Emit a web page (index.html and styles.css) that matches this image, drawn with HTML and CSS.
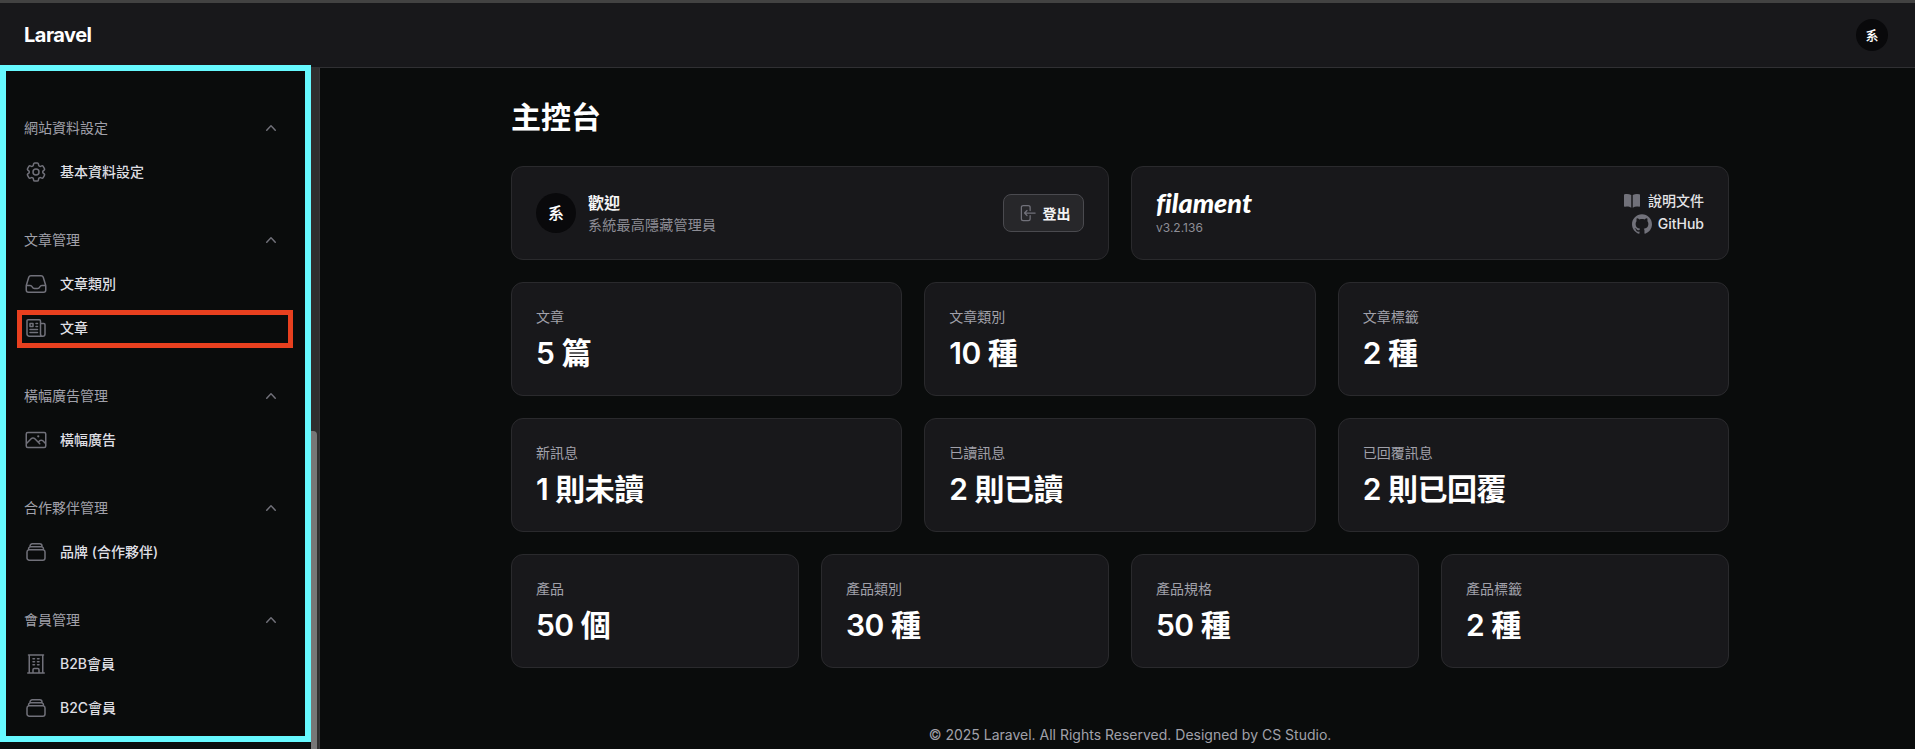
FILE: index.html
```html
<!DOCTYPE html>
<html lang="zh-TW">
<head>
    <meta charset="UTF-8">
    <meta name="viewport" content="width=device-width, initial-scale=1.0">
    <title>主控台 - Laravel</title>
    <link rel="stylesheet" href="styles.css">
</head>
<body>
    <div class="top-strip"></div>
    <header class="topbar">
        <a class="brand">Laravel</a>
        <div class="avatar avatar-small">系</div>
    </header>

    <div class="layout">
        <aside class="sidebar">
            <nav class="nav">
                <div class="nav-group">
                    <div class="nav-label">
                        <span>網站資料設定</span>
                        <svg class="chevron" viewBox="0 0 20 20"><path d="M14.77 12.79a.75.75 0 0 1-1.06-.02L10 8.832 6.29 12.77a.75.75 0 1 1-1.08-1.04l4.25-4.5a.75.75 0 0 1 1.08 0l4.25 4.5a.75.75 0 0 1-.02 1.06Z"/></svg>
                    </div>
                    <a class="nav-item">
                        <svg class="nav-icon" viewBox="0 0 24 24"><path d="M9.594 3.94c.09-.542.56-.94 1.11-.94h2.593c.55 0 1.02.398 1.11.94l.213 1.281c.063.374.313.686.645.87.074.04.147.083.22.127.325.196.72.257 1.075.124l1.217-.456a1.125 1.125 0 0 1 1.37.49l1.296 2.247a1.125 1.125 0 0 1-.26 1.431l-1.003.827c-.293.241-.438.613-.43.992a7.723 7.723 0 0 1 0 .255c-.008.378.137.75.43.991l1.004.827c.424.35.534.955.26 1.43l-1.298 2.247a1.125 1.125 0 0 1-1.369.491l-1.217-.456c-.355-.133-.75-.072-1.076.124a6.47 6.47 0 0 1-.22.128c-.331.183-.581.495-.644.869l-.213 1.281c-.09.543-.56.94-1.11.94h-2.594c-.55 0-1.019-.398-1.11-.94l-.213-1.281c-.062-.374-.312-.686-.644-.87a6.52 6.52 0 0 1-.22-.127c-.325-.196-.72-.257-1.076-.124l-1.217.456a1.125 1.125 0 0 1-1.369-.49l-1.297-2.247a1.125 1.125 0 0 1 .26-1.431l1.004-.827c.292-.24.437-.613.43-.991a6.932 6.932 0 0 1 0-.255c.007-.38-.138-.751-.43-.992l-1.004-.827a1.125 1.125 0 0 1-.26-1.43l1.297-2.247a1.125 1.125 0 0 1 1.37-.491l1.216.456c.356.133.751.072 1.076-.124.072-.044.146-.086.22-.128.332-.183.582-.495.644-.869l.214-1.28Z"/><path d="M15 12a3 3 0 1 1-6 0 3 3 0 0 1 6 0Z"/></svg>
                        <span>基本資料設定</span>
                    </a>
                </div>

                <div class="nav-group">
                    <div class="nav-label">
                        <span>文章管理</span>
                        <svg class="chevron" viewBox="0 0 20 20"><path d="M14.77 12.79a.75.75 0 0 1-1.06-.02L10 8.832 6.29 12.77a.75.75 0 1 1-1.08-1.04l4.25-4.5a.75.75 0 0 1 1.08 0l4.25 4.5a.75.75 0 0 1-.02 1.06Z"/></svg>
                    </div>
                    <a class="nav-item">
                        <svg class="nav-icon" viewBox="0 0 24 24"><path d="M2.25 13.5h3.86a2.25 2.25 0 0 1 2.012 1.244l.256.512a2.25 2.25 0 0 0 2.013 1.244h3.218a2.25 2.25 0 0 0 2.013-1.244l.256-.512a2.25 2.25 0 0 1 2.013-1.244h3.859m-19.5.338V18a2.25 2.25 0 0 0 2.25 2.25h15A2.25 2.25 0 0 0 21.75 18v-4.162c0-.224-.034-.447-.1-.661L19.24 5.338a2.25 2.25 0 0 0-2.15-1.588H6.911a2.25 2.25 0 0 0-2.15 1.588L2.35 13.177a2.25 2.25 0 0 0-.1.661Z"/></svg>
                        <span>文章類別</span>
                    </a>
                    <a class="nav-item nav-item-marked">
                        <svg class="nav-icon" viewBox="0 0 24 24"><path d="M12 7.5h1.5m-1.5 3h1.5m-7.5 3h7.5m-7.5 3h7.5m3-9h3.375c.621 0 1.125.504 1.125 1.125V18a2.25 2.25 0 0 1-2.25 2.25M16.5 7.5V18a2.25 2.25 0 0 0 2.25 2.25M16.5 7.5V4.875c0-.621-.504-1.125-1.125-1.125H4.125C3.504 3.75 3 4.254 3 4.875V18a2.25 2.25 0 0 0 2.25 2.25h13.5M6 7.5h3v3H6v-3Z"/></svg>
                        <span>文章</span>
                    </a>
                </div>

                <div class="nav-group">
                    <div class="nav-label">
                        <span>橫幅廣告管理</span>
                        <svg class="chevron" viewBox="0 0 20 20"><path d="M14.77 12.79a.75.75 0 0 1-1.06-.02L10 8.832 6.29 12.77a.75.75 0 1 1-1.08-1.04l4.25-4.5a.75.75 0 0 1 1.08 0l4.25 4.5a.75.75 0 0 1-.02 1.06Z"/></svg>
                    </div>
                    <a class="nav-item">
                        <svg class="nav-icon" viewBox="0 0 24 24"><path d="m2.25 15.75 5.159-5.159a2.25 2.25 0 0 1 3.182 0l5.159 5.159m-1.5-1.5 1.409-1.409a2.25 2.25 0 0 1 3.182 0l2.909 2.909m-18 3.75h16.5a1.5 1.5 0 0 0 1.5-1.5V6a1.5 1.5 0 0 0-1.5-1.5H3.75A1.5 1.5 0 0 0 2.25 6v12a1.5 1.5 0 0 0 1.5 1.5Zm10.5-11.25h.008v.008h-.008V8.25Zm.375 0a.375.375 0 1 1-.75 0 .375.375 0 0 1 .75 0Z"/></svg>
                        <span>橫幅廣告</span>
                    </a>
                </div>

                <div class="nav-group">
                    <div class="nav-label">
                        <span>合作夥伴管理</span>
                        <svg class="chevron" viewBox="0 0 20 20"><path d="M14.77 12.79a.75.75 0 0 1-1.06-.02L10 8.832 6.29 12.77a.75.75 0 1 1-1.08-1.04l4.25-4.5a.75.75 0 0 1 1.08 0l4.25 4.5a.75.75 0 0 1-.02 1.06Z"/></svg>
                    </div>
                    <a class="nav-item">
                        <svg class="nav-icon" viewBox="0 0 24 24"><path d="M6 6.878V6a2.25 2.25 0 0 1 2.25-2.25h7.5A2.25 2.25 0 0 1 18 6v.878m-12 0c.235-.083.487-.128.75-.128h10.5c.263 0 .515.045.75.128m-12 0A2.251 2.251 0 0 0 4.5 9v.878m13.5-3A2.25 2.25 0 0 1 19.5 9v.878m0 0a2.246 2.246 0 0 0-.75-.128H5.25c-.263 0-.515.045-.75.128m15 0A2.25 2.25 0 0 1 21 12v6a2.25 2.25 0 0 1-2.25 2.25H5.25A2.25 2.25 0 0 1 3 18v-6c0-.98.626-1.813 1.5-2.122"/></svg>
                        <span>品牌 (合作夥伴)</span>
                    </a>
                </div>

                <div class="nav-group">
                    <div class="nav-label">
                        <span>會員管理</span>
                        <svg class="chevron" viewBox="0 0 20 20"><path d="M14.77 12.79a.75.75 0 0 1-1.06-.02L10 8.832 6.29 12.77a.75.75 0 1 1-1.08-1.04l4.25-4.5a.75.75 0 0 1 1.08 0l4.25 4.5a.75.75 0 0 1-.02 1.06Z"/></svg>
                    </div>
                    <a class="nav-item">
                        <svg class="nav-icon" viewBox="0 0 24 24"><path d="M3.75 21h16.5M4.5 3h15M5.25 3v18m13.5-18v18M9 6.75h1.5m-1.5 3h1.5m-1.5 3h1.5m3-6H15m-1.5 3H15m-1.5 3H15M9 21v-3.375c0-.621.504-1.125 1.125-1.125h3.75c.621 0 1.125.504 1.125 1.125V21"/></svg>
                        <span>B2B會員</span>
                    </a>
                    <a class="nav-item">
                        <svg class="nav-icon" viewBox="0 0 24 24"><path d="M6 6.878V6a2.25 2.25 0 0 1 2.25-2.25h7.5A2.25 2.25 0 0 1 18 6v.878m-12 0c.235-.083.487-.128.75-.128h10.5c.263 0 .515.045.75.128m-12 0A2.251 2.251 0 0 0 4.5 9v.878m13.5-3A2.25 2.25 0 0 1 19.5 9v.878m0 0a2.246 2.246 0 0 0-.75-.128H5.25c-.263 0-.515.045-.75.128m15 0A2.25 2.25 0 0 1 21 12v6a2.25 2.25 0 0 1-2.25 2.25H5.25A2.25 2.25 0 0 1 3 18v-6c0-.98.626-1.813 1.5-2.122"/></svg>
                        <span>B2C會員</span>
                    </a>
                </div>
            </nav>
            <div class="scrollbar"><div class="scrollbar-thumb"></div></div>
            <div class="marker-cyan"></div>
        </aside>

        <main class="main">
            <h1 class="page-title">主控台</h1>

            <div class="rows">
                <div class="grid grid-2">
                    <section class="card card-wide">
                        <div class="avatar">系</div>
                        <div class="user-text">
                            <div class="user-title">歡迎</div>
                            <div class="user-sub">系統最高隱藏管理員</div>
                        </div>
                        <button class="btn-logout">
                            <svg class="btn-icon" viewBox="0 0 24 24"><path d="M15.75 9V5.25A2.25 2.25 0 0 0 13.5 3h-6a2.25 2.25 0 0 0-2.25 2.25v13.5A2.25 2.25 0 0 0 7.5 21h6a2.25 2.25 0 0 0 2.25-2.25V15M12 9l-3 3m0 0 3 3m-3-3h12.75"/></svg>
                            <span>登出</span>
                        </button>
                    </section>
                    <section class="card card-wide">
                        <div class="filament">
                            <div class="filament-logo">filament</div>
                            <div class="filament-version">v3.2.136</div>
                        </div>
                        <div class="links">
                            <a class="link">
                                <svg class="link-icon" viewBox="0 0 20 20"><path d="M10.75 16.82A7.462 7.462 0 0 1 15 15.5c.71 0 1.396.098 2.046.282A.75.75 0 0 0 18 15.06v-11a.75.75 0 0 0-.546-.721A9.006 9.006 0 0 0 15 3a8.963 8.963 0 0 0-4.25 1.065V16.82ZM9.25 4.065A8.963 8.963 0 0 0 5 3c-.85 0-1.673.118-2.454.339A.75.75 0 0 0 2 4.06v11a.75.75 0 0 0 .954.721A7.506 7.506 0 0 1 5 15.5c1.579 0 3.042.487 4.25 1.32V4.065Z"/></svg>
                                <span>說明文件</span>
                            </a>
                            <a class="link">
                                <svg class="link-icon" viewBox="0 0 24 24"><path d="M12 .297c-6.63 0-12 5.373-12 12 0 5.303 3.438 9.8 8.205 11.385.6.113.82-.258.82-.577 0-.285-.01-1.04-.015-2.04-3.338.724-4.042-1.61-4.042-1.61C4.422 18.07 3.633 17.7 3.633 17.7c-1.087-.744.084-.729.084-.729 1.205.084 1.838 1.236 1.838 1.236 1.07 1.835 2.809 1.305 3.495.998.108-.776.417-1.305.76-1.605-2.665-.3-5.466-1.332-5.466-5.93 0-1.31.465-2.38 1.235-3.22-.135-.303-.54-1.523.105-3.176 0 0 1.005-.322 3.3 1.23.96-.267 1.98-.399 3-.405 1.02.006 2.04.138 3 .405 2.28-1.552 3.285-1.23 3.285-1.23.645 1.653.24 2.873.12 3.176.765.84 1.23 1.91 1.23 3.22 0 4.61-2.805 5.625-5.475 5.92.42.36.81 1.096.81 2.22 0 1.606-.015 2.896-.015 3.286 0 .315.21.69.825.57C20.565 22.092 24 17.592 24 12.297c0-6.627-5.373-12-12-12"/></svg>
                                <span>GitHub</span>
                            </a>
                        </div>
                    </section>
                </div>

                <div class="grid grid-3">
                    <section class="card stat"><div class="stat-label">文章</div><div class="stat-value">5 篇</div></section>
                    <section class="card stat"><div class="stat-label">文章類別</div><div class="stat-value">10 種</div></section>
                    <section class="card stat"><div class="stat-label">文章標籤</div><div class="stat-value">2 種</div></section>
                </div>

                <div class="grid grid-3">
                    <section class="card stat"><div class="stat-label">新訊息</div><div class="stat-value">1 則未讀</div></section>
                    <section class="card stat"><div class="stat-label">已讀訊息</div><div class="stat-value">2 則已讀</div></section>
                    <section class="card stat"><div class="stat-label">已回覆訊息</div><div class="stat-value">2 則已回覆</div></section>
                </div>

                <div class="grid grid-4">
                    <section class="card stat"><div class="stat-label">產品</div><div class="stat-value">50 個</div></section>
                    <section class="card stat"><div class="stat-label">產品類別</div><div class="stat-value">30 種</div></section>
                    <section class="card stat"><div class="stat-label">產品規格</div><div class="stat-value">50 種</div></section>
                    <section class="card stat"><div class="stat-label">產品標籤</div><div class="stat-value">2 種</div></section>
                </div>
            </div>

            <footer class="footer">© 2025 Laravel. All Rights Reserved. Designed by CS Studio.</footer>
        </main>
    </div>
</body>
</html>
```

FILE: styles.css
```css
*, *::after {
    box-sizing: border-box;
}
html, body {
    height: 100%;
}
body {
    margin: 0;
    height: 749px;
    overflow: hidden;
    background-color: #0a0c0c;
    color: #fff;
    font-family: Inter, "Noto Sans CJK TC", sans-serif;
    font-size: 14px;
    line-height: 20px;
    display: flex;
    flex-direction: column;
}
svg {
    display: block;
    flex-shrink: 0;
}

.top-strip {
    height: 3px;
    background-color: #424242;
}
.topbar {
    height: 65px;
    background-color: #18181b;
    border-bottom: 1px solid #303033;
    display: flex;
    align-items: center;
    justify-content: space-between;
    padding: 0 27px 0 24px;
}
.brand {
    font-size: 20px;
    font-weight: 700;
    letter-spacing: -0.5px;
}

.avatar {
    width: 40px;
    height: 40px;
    border-radius: 50%;
    background-color: #09090b;
    display: flex;
    align-items: center;
    justify-content: center;
    font-size: 16px;
    font-weight: 500;
    flex-shrink: 0;
}
.avatar-small {
    width: 32px;
    height: 32px;
    font-size: 13px;
}

.layout {
    flex: 1;
    display: flex;
    min-height: 0;
}

/* sidebar */
.sidebar {
    position: relative;
    width: 320px;
    flex-shrink: 0;
    display: flex;
    border-right: 1px solid #38383a;
}
.nav {
    flex: 1;
    padding: 38px 24px 0;
    display: flex;
    flex-direction: column;
    gap: 24px;
}
.nav-label {
    height: 44px;
    display: flex;
    align-items: center;
    justify-content: space-between;
    color: #a1a1aa;
    padding-right: 6px;
}
.chevron {
    width: 20px;
    height: 20px;
    fill: #71717a;
}
.nav-item {
    height: 44px;
    display: flex;
    align-items: center;
    gap: 12px;
    color: #dfdfe3;
    font-weight: 500;
}
.nav-item-marked {
    position: relative;
}
.nav-item-marked::after {
    content: "";
    position: absolute;
    left: -7.5px;
    right: -6px;
    top: 4px;
    height: 38px;
    border: 5.5px solid #e8401f;
}
.nav-icon {
    width: 24px;
    height: 24px;
    fill: none;
    stroke: #71717a;
    stroke-width: 1.5;
    stroke-linecap: round;
    stroke-linejoin: round;
}
.scrollbar {
    width: 8px;
    background-color: #2f2f2f;
    padding-top: 363px;
}
.scrollbar-thumb {
    height: 100%;
    background-color: #777;
    border-radius: 0 4px 0 0;
    margin-right: 2px;
}
.marker-cyan {
    position: absolute;
    left: 0;
    top: -3px;
    width: 311px;
    height: 677px;
    border: 6px solid #66f9ff;
}

/* main */
.main {
    flex: 1;
    min-width: 0;
    padding: 31px 186px 0 191px;
}
.page-title {
    margin: 0 0 31px;
    font-size: 30px;
    line-height: 36px;
    font-weight: 700;
}
.rows {
    display: flex;
    flex-direction: column;
    gap: 22.5px;
}
.grid {
    display: grid;
    gap: 22px;
}
.grid-2 {
    grid-template-columns: repeat(2, 1fr);
}
.grid-3 {
    grid-template-columns: repeat(3, 1fr);
}
.grid-4 {
    grid-template-columns: repeat(4, 1fr);
}
.card {
    background-color: #18181b;
    border: 1px solid #2a2a2d;
    border-radius: 12px;
    padding: 24px;
}
.card-wide {
    height: 93.5px;
    display: flex;
    align-items: center;
    gap: 12px;
    padding: 0 24px;
}
.user-text {
    flex: 1;
}
.user-title {
    font-weight: 600;
    font-size: 16px;
    line-height: 24px;
    color: #f4f4f5;
}
.user-sub {
    color: #8e8e96;
    line-height: 20px;
    letter-spacing: 0.25px;
}
.btn-logout {
    width: 81px;
    height: 38px;
    display: flex;
    align-items: center;
    justify-content: center;
    gap: 6px;
    background-color: #27272a;
    border: 1px solid #4a4a4f;
    border-radius: 8px;
    color: #f4f4f5;
    font-family: inherit;
    font-size: 14px;
    font-weight: 600;
    padding: 0;
}
.btn-icon {
    width: 20px;
    height: 20px;
    fill: none;
    stroke: #71717a;
    stroke-width: 1.5;
    stroke-linecap: round;
    stroke-linejoin: round;
}
.filament {
    flex: 1;
}
.filament-logo {
    font-family: Lato, sans-serif;
    font-size: 27px;
    line-height: 27px;
    font-weight: 900;
    font-style: italic;
    font-variant-ligatures: none;
    color: #fff;
}
.filament-version {
    font-size: 12px;
    line-height: 16px;
    color: #8e8e96;
    margin-top: 4px;
}
.links {
    display: flex;
    flex-direction: column;
    align-items: flex-end;
    gap: 3px;
}
.link {
    display: flex;
    align-items: center;
    gap: 6px;
    color: #e4e4e7;
    font-weight: 500;
    line-height: 20px;
}
.link-icon {
    width: 20px;
    height: 20px;
    fill: #71717a;
}
.stat {
    height: 113.5px;
}
.stat-label {
    color: #a1a1aa;
}
.stat-value {
    margin-top: 7.5px;
    font-size: 30px;
    line-height: 36px;
    font-weight: 600;
    letter-spacing: -0.5px;
}
.footer {
    text-align: center;
    color: #a1a1aa;
    margin-top: 57px;
    padding-left: 20px;
}
```
